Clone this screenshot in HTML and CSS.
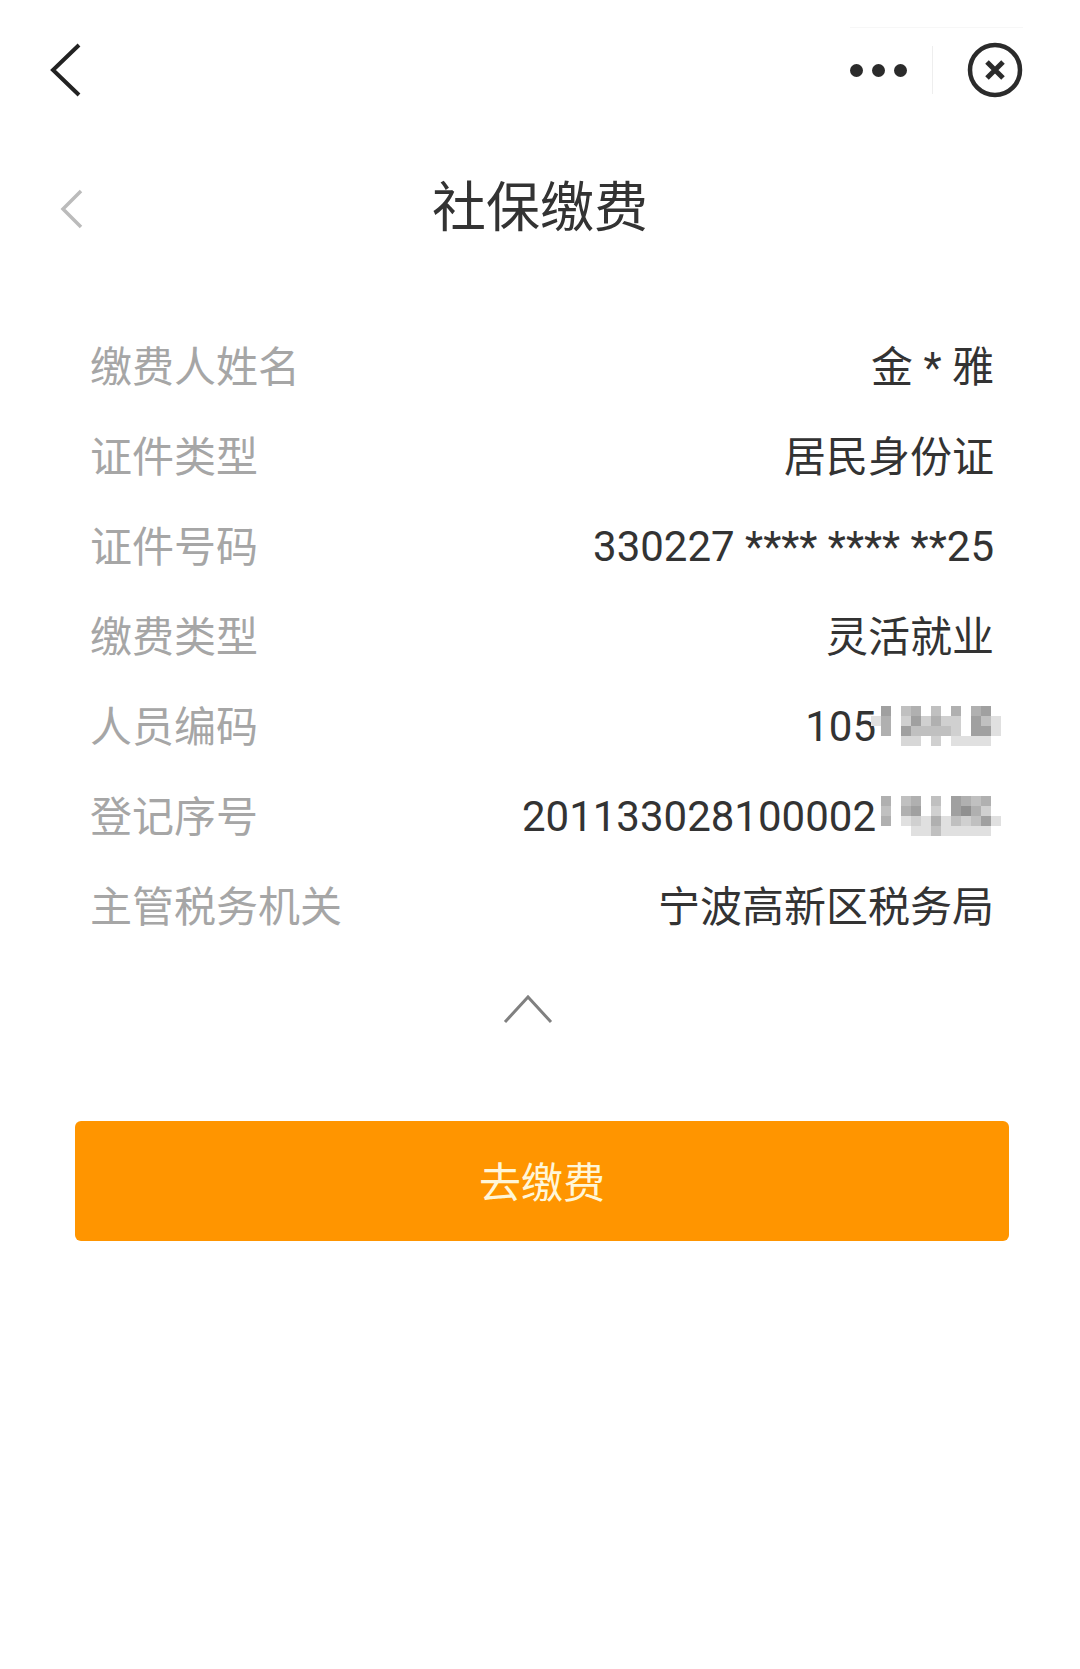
FILE: index.html
```html
<!DOCTYPE html>
<html lang="zh-CN">

<head>
    <meta charset="UTF-8" />
    <meta name="viewport" content="width=device-width, initial-scale=1.0" />
    <title>社保缴费</title>
    <link rel="stylesheet" href="styles.css">
</head>

<body>

    <header class="topbar">
        <svg class="back-icon" width="34" height="56" viewBox="0 0 34 56">
            <path d="M30 3 L4 28 L30 53" />
        </svg>
        <div class="capsule">
            <div class="dots"><span></span><span></span><span></span></div>
            <div class="capsule-line"></div>
            <svg class="close-icon" width="56" height="56" viewBox="0 0 56 56">
                <circle cx="28" cy="28" r="25" />
                <path d="M20 20 L36 36 M36 20 L20 36" />
            </svg>
        </div>
    </header>

    <div class="title-row">
        <svg class="title-back" width="24" height="40" viewBox="0 0 24 40">
            <path d="M21 2 L3 20 L21 38" />
        </svg>
        <h1>社保缴费</h1>
    </div>

    <ul class="info-list">
        <li class="info-row"><span class="label">缴费人姓名</span><span class="value">金 * 雅</span></li>
        <li class="info-row"><span class="label">证件类型</span><span class="value">居民身份证</span></li>
        <li class="info-row"><span class="label">证件号码</span><span class="value num">330227 **** **** **25</span></li>
        <li class="info-row"><span class="label">缴费类型</span><span class="value">灵活就业</span></li>
        <li class="info-row">
            <span class="label">人员编码</span>
            <span class="value num">105
                <svg class="mosaic" width="130" height="40" viewBox="0 0 13 4" shape-rendering="crispEdges">
                    <rect x="1" y="0" width="1" height="1" fill="#aaa" /><rect x="3" y="0" width="1" height="1" fill="#ccc" /><rect x="4" y="0" width="1" height="1" fill="#bbb" /><rect x="6" y="0" width="1" height="1" fill="#ccc" /><rect x="8" y="0" width="1" height="1" fill="#bbb" /><rect x="10" y="0" width="1" height="1" fill="#bbb" /><rect x="11" y="0" width="1" height="1" fill="#aaa" />
                    <rect x="0" y="1" width="1" height="1" fill="#eee" /><rect x="1" y="1" width="1" height="1" fill="#bbb" /><rect x="3" y="1" width="1" height="1" fill="#ddd" /><rect x="4" y="1" width="1" height="1" fill="#aaa" /><rect x="5" y="1" width="1" height="1" fill="#ddd" /><rect x="6" y="1" width="1" height="1" fill="#bbb" /><rect x="7" y="1" width="1" height="1" fill="#ddd" /><rect x="8" y="1" width="1" height="1" fill="#ddd" /><rect x="10" y="1" width="1" height="1" fill="#aaa" /><rect x="11" y="1" width="1" height="1" fill="#ccc" /><rect x="12" y="1" width="1" height="1" fill="#eee" />
                    <rect x="1" y="2" width="1" height="1" fill="#bbb" /><rect x="3" y="2" width="1" height="1" fill="#aaa" /><rect x="4" y="2" width="4" height="1" fill="#ccc" /><rect x="8" y="2" width="1" height="1" fill="#ddd" /><rect x="10" y="2" width="2" height="1" fill="#aaa" /><rect x="12" y="2" width="1" height="1" fill="#eee" />
                    <rect x="3" y="3" width="2" height="1" fill="#e5e5e5" /><rect x="6" y="3" width="1" height="1" fill="#ddd" /><rect x="8" y="3" width="4" height="1" fill="#eee" />
                </svg>
            </span>
        </li>
        <li class="info-row">
            <span class="label">登记序号</span>
            <span class="value num">201133028100002
                <svg class="mosaic" width="130" height="40" viewBox="0 0 13 4" shape-rendering="crispEdges">
                    <rect x="1" y="0" width="1" height="1" fill="#bbb" /><rect x="3" y="0" width="1" height="1" fill="#ccc" /><rect x="4" y="0" width="1" height="1" fill="#bbb" /><rect x="6" y="0" width="1" height="1" fill="#ccc" /><rect x="8" y="0" width="1" height="1" fill="#aaa" /><rect x="9" y="0" width="1" height="1" fill="#bbb" /><rect x="10" y="0" width="1" height="1" fill="#ccc" /><rect x="11" y="0" width="1" height="1" fill="#bbb" />
                    <rect x="1" y="1" width="1" height="1" fill="#ccc" /><rect x="3" y="1" width="1" height="1" fill="#bbb" /><rect x="4" y="1" width="1" height="1" fill="#aaa" /><rect x="6" y="1" width="1" height="1" fill="#ddd" /><rect x="8" y="1" width="1" height="1" fill="#aaa" /><rect x="9" y="1" width="1" height="1" fill="#999" /><rect x="10" y="1" width="1" height="1" fill="#bbb" /><rect x="11" y="1" width="1" height="1" fill="#ddd" />
                    <rect x="1" y="2" width="1" height="1" fill="#bbb" /><rect x="3" y="2" width="1" height="1" fill="#eee" /><rect x="4" y="2" width="1" height="1" fill="#ddd" /><rect x="5" y="2" width="1" height="1" fill="#eee" /><rect x="6" y="2" width="1" height="1" fill="#bbb" /><rect x="7" y="2" width="1" height="1" fill="#eee" /><rect x="8" y="2" width="1" height="1" fill="#ccc" /><rect x="9" y="2" width="1" height="1" fill="#ddd" /><rect x="10" y="2" width="1" height="1" fill="#ccc" /><rect x="11" y="2" width="1" height="1" fill="#aaa" /><rect x="12" y="2" width="1" height="1" fill="#eee" />
                    <rect x="4" y="3" width="2" height="1" fill="#eee" /><rect x="6" y="3" width="1" height="1" fill="#ccc" /><rect x="7" y="3" width="5" height="1" fill="#eee" />
                </svg>
            </span>
        </li>
        <li class="info-row"><span class="label">主管税务机关</span><span class="value">宁波高新区税务局</span></li>
    </ul>

    <div class="toggle">
        <svg width="50" height="30" viewBox="0 0 50 30">
            <path d="M2 28 L25 3 L48 28" />
        </svg>
    </div>

    <button class="pay-btn" type="button">去缴费</button>

</body>

</html>
```

FILE: styles.css
```css
body {
    margin: 0;
    background: #fff;
    font-family: Roboto, "Noto Sans CJK SC", sans-serif;
    color: #333;
}

svg path,
svg circle {
    fill: none;
}

/* top bar */
.topbar {
    height: 140px;
    padding: 0 57px 0 49px;
    display: flex;
    align-items: center;
    justify-content: space-between;
}

.back-icon path {
    stroke: #222;
    stroke-width: 4;
}

.capsule {
    display: flex;
    align-items: center;
    align-self: flex-start;
    margin-top: 27px;
    padding: 14px 0 18px;
    border-top: 1px solid #f7f7f7;
}

.dots {
    display: flex;
    gap: 9px;
    margin-right: 25px;
}

.dots span {
    width: 13px;
    height: 13px;
    border-radius: 50%;
    background: #2b2b2b;
}

.capsule-line {
    width: 1px;
    height: 48px;
    background: #eee;
    margin-right: 34px;
}

.close-icon circle {
    stroke: #2b2b2b;
    stroke-width: 4.5;
}

.close-icon path {
    stroke: #2b2b2b;
    stroke-width: 5;
}

/* title */
.title-row {
    position: relative;
    height: 126px;
    display: flex;
    align-items: center;
    justify-content: center;
}

.title-back {
    position: absolute;
    left: 60px;
    top: 49px;
}

.title-back path {
    stroke: #bbb;
    stroke-width: 3.5;
}

h1 {
    margin: 0;
    font-size: 54px;
    font-weight: 400;
    color: #333;
}

/* rows */
.info-list {
    list-style: none;
    margin: 52px 0 0;
    padding: 0 86px 0 90px;
}

.info-row {
    height: 90px;
    display: flex;
    align-items: center;
    justify-content: space-between;
    font-size: 42px;
}

.label {
    color: #a6a6a6;
}

.value {
    display: flex;
    align-items: center;
    color: #333;
}

/* digits sit a little lower than the cjk text */
.num {
    padding-top: 6px;
}

.mosaic {
    margin: 0 -7px 0 -5px;
    filter: blur(0.7px) brightness(0.94);
}

/* expand arrow */
.toggle {
    display: flex;
    justify-content: center;
    padding: 46px 25px 97px 0;
}

.toggle svg {
    display: block;
}

.toggle path {
    stroke: #808080;
    stroke-width: 3;
}

.pay-btn {
    display: block;
    width: 934px;
    height: 120px;
    margin-left: 75px;
    padding-bottom: 4px;
    background-color: #ff9500;
    color: #fff6d8;
    border: none;
    border-radius: 6px;
    font-family: "Noto Sans CJK SC", sans-serif;
    font-size: 42px;
}
```
